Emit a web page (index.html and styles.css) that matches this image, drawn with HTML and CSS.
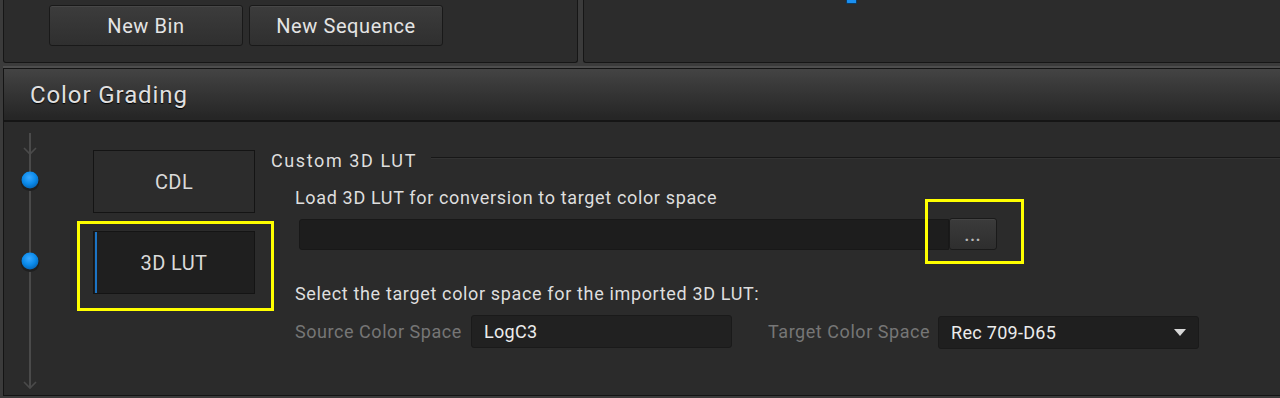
FILE: index.html
```html
<!DOCTYPE html>
<html>
<head>
<meta charset="utf-8">
<link rel="stylesheet" href="styles.css">
</head>
<body>
<div class="app">
  <div class="top">
    <div class="panel panel-left">
      <div class="btn-row">
        <button class="tool-btn">New Bin</button>
        <button class="tool-btn">New Sequence</button>
      </div>
    </div>
    <div class="panel panel-right">
      <span class="handle"></span>
    </div>
  </div>

  <section class="grading">
    <header class="grading-head">Color Grading</header>
    <div class="grading-body">
      <svg class="track" width="20" height="258" viewBox="0 0 20 258">
        <defs>
          <radialGradient id="dot" cx="45%" cy="35%" r="65%">
            <stop offset="0" stop-color="#3aa8ff"/>
            <stop offset="0.6" stop-color="#0a8aea"/>
            <stop offset="1" stop-color="#0667b8"/>
          </radialGradient>
        </defs>
        <line x1="10" y1="1" x2="10" y2="256" stroke="#4a4a4a" stroke-width="2"/>
        <polyline points="4,16 10,22 16,16" fill="none" stroke="#4a4a4a" stroke-width="1.6"/>
        <polyline points="4,250 10,256 16,250" fill="none" stroke="#4a4a4a" stroke-width="1.6"/>
        <circle cx="10" cy="49.5" r="9.5" fill="#1f1f1f"/>
        <circle cx="10" cy="48" r="8.5" fill="url(#dot)"/>
        <circle cx="10" cy="130.5" r="9.5" fill="#1f1f1f"/>
        <circle cx="10" cy="129" r="8.5" fill="url(#dot)"/>
      </svg>

      <div class="modes">
        <div class="mode">CDL</div>
        <div class="mode mode-active">3D LUT<span class="mark mark-mode"></span></div>
      </div>

      <div class="content">
        <div class="group-title"><span>Custom 3D LUT</span><i class="rule"></i></div>
        <div class="label">Load 3D LUT for conversion to target color space</div>
        <div class="file-row">
          <div class="file-input"></div>
          <div class="browse">...<span class="mark mark-browse"></span></div>
        </div>
        <div class="label label-select">Select the target color space for the imported 3D LUT:</div>
        <div class="cs-row">
          <span class="cs-label">Source Color Space</span>
          <div class="cs-field">LogC3</div>
          <span class="cs-label cs-label-target">Target Color Space</span>
          <div class="cs-field cs-select">Rec 709-D65<svg class="caret" width="12" height="7" viewBox="0 0 12 7"><polygon points="0,0 12,0 6,7" fill="#d8d8d8"/></svg></div>
        </div>
      </div>
    </div>
  </section>
</div>
</body>
</html>
```

FILE: styles.css
```css
* { box-sizing: border-box; }
html, body {
  margin: 0;
  padding: 0;
  width: 1280px;
  height: 398px;
  overflow: hidden;
  background: #3b3b3b;
  font-family: Roboto, "Liberation Sans", sans-serif;
  color: #dcdcdc;
}
.app { width: 1280px; height: 398px; }

.top {
  display: flex;
  height: 63px;
}
.panel {
  background: #2c2c2c;
  border: 1px solid #161616;
  border-top: none;
}
.panel-left {
  margin-left: 3px;
  width: 575px;
  border-radius: 0 0 3px 3px;
}
.panel-right {
  margin-left: 5px;
  flex: 1;
  border-right: none;
  border-radius: 0 0 0 3px;
  position: relative;
}
.handle {
  position: absolute;
  left: 262px;
  top: 0;
  width: 11px;
  height: 4px;
  background: #1a8ff0;
  border: 1px solid #0a3c66;
  border-top: none;
  border-radius: 0 0 2px 2px;
}
.btn-row {
  display: flex;
  gap: 6px;
  padding: 5px 0 0 45px;
}
.tool-btn {
  width: 194px;
  height: 41px;
  background: linear-gradient(#3c3c3c, #2f2f2f);
  border: 1px solid #191919;
  border-radius: 3px;
  box-shadow: inset 0 1px 0 #474747;
  color: #e4e4e4;
  font-family: Roboto, "Liberation Sans", sans-serif;
  font-size: 20px;
  letter-spacing: 0.6px;
  padding: 0;
}

.grading {
  margin: 5px 0 0 3px;
  border-top: 1px solid #141414;
  border-left: 1px solid #141414;
  border-bottom: 1px solid #141414;
  box-shadow: 0 -2px 0 #4d4d4d;
}
.grading-head {
  height: 53px;
  border-bottom: 2px solid #151515;
  background: linear-gradient(#444444, #3a3a3a 30%, #262626 95%);
  padding-left: 26px;
  display: flex;
  align-items: center;
  font-size: 24px;
  letter-spacing: 0.9px;
  color: #e0e0e0;
  text-shadow: 0 1px 1px #000;
}
.grading-body {
  height: 273px;
  background: #2b2b2b;
  display: flex;
  align-items: flex-start;
}
.track {
  display: block;
  margin: 10px 0 0 16px;
  flex: none;
}

.modes {
  margin: 28px 0 0 53px;
  display: flex;
  flex-direction: column;
  gap: 18px;
  flex: none;
}
.mode {
  position: relative;
  width: 162px;
  height: 63px;
  border: 1px solid #141414;
  background: #2c2c2c;
  display: flex;
  align-items: center;
  justify-content: center;
  font-size: 20px;
  letter-spacing: 0.4px;
  color: #dadada;
}
.mode-active {
  background: #1f1f1f;
  box-shadow: inset 1px 0 0 #1f1f1f, inset 3px 0 0 #1c74c4;
}
.mark {
  position: absolute;
  border: 3px solid #ffff00;
  pointer-events: none;
}
.mark-mode {
  left: -17px;
  top: -11px;
  right: -20px;
  bottom: -18px;
}

.content {
  margin: 28px 0 0 16px;
  flex: 1;
  min-width: 0;
}
.group-title {
  display: flex;
  align-items: center;
  height: 20px;
  font-size: 18px;
  letter-spacing: 1.6px;
  color: #dedede;
}
.rule {
  flex: 1;
  height: 2px;
  margin-left: 14px;
  margin-top: -4px;
  background: #171717;
  border-bottom: 1px solid #333;
}
.label {
  margin: 18px 0 0 24px;
  height: 20px;
  line-height: 20px;
  font-size: 18px;
  letter-spacing: 0.65px;
  color: #dedede;
  white-space: nowrap;
}
.label-select { margin-top: 34px; }

.file-row {
  display: flex;
  margin: 11px 0 0 28px;
  height: 31px;
}
.file-input {
  width: 650px;
  height: 31px;
  background: #1d1d1d;
  border: 1px solid #181818;
  border-radius: 3px 0 0 3px;
}
.browse {
  position: relative;
  width: 48px;
  height: 32px;
  margin-top: -1px;
  background: linear-gradient(#3b3b3b, #2e2e2e);
  border: 1px solid #1a1a1a;
  border-radius: 3px;
  box-shadow: inset 0 1px 0 #444;
  display: flex;
  align-items: center;
  justify-content: center;
  padding-top: 3px;
  font-size: 16px;
  font-weight: bold;
  letter-spacing: 1px;
  color: #b8b8b8;
}
.mark-browse {
  left: -25px;
  top: -20px;
  right: -28px;
  bottom: -15px;
}

.cs-row {
  display: flex;
  align-items: center;
  margin: 11px 0 0 24px;
  height: 33px;
}
.cs-label {
  width: 176px;
  font-size: 18px;
  letter-spacing: 0.55px;
  color: #767676;
  white-space: nowrap;
  flex: none;
}
.cs-label-target {
  width: 170px;
  margin-left: 36px;
}
.cs-field {
  width: 261px;
  height: 33px;
  background: #212121;
  border: 1px solid #1a1a1a;
  border-radius: 3px;
  display: flex;
  align-items: center;
  padding-left: 12px;
  font-size: 18px;
  letter-spacing: 0.3px;
  color: #ececec;
  flex: none;
}
.cs-select {
  background: #1f1f1f;
  justify-content: space-between;
  padding-right: 12px;
  position: relative;
  top: 1px;
}
.caret { display: block; }
```
